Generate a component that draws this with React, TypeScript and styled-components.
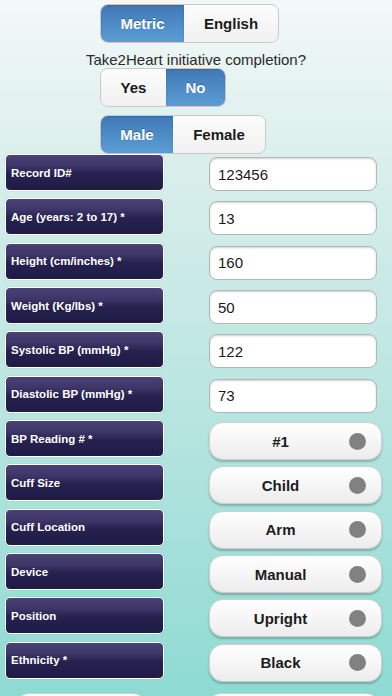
import React from 'react';
import styled, { createGlobalStyle, css } from 'styled-components';

let GlobalStyle = createGlobalStyle`
  html, body {
    margin: 0;
    padding: 0;
  }
  body {
    font-family: 'Liberation Sans', Arial, Helvetica, sans-serif;
    color: #222;
  }
`;

// ---------
// PAGE
// ---------

let Page = styled.div`
  height: 100vh;
  overflow: hidden;
  box-sizing: border-box;
  padding-top: 4px;
  background: linear-gradient(180deg, #f3f9f8 0%, #dbefec 22%, #b9e5e0 58%, #8edbd3 100%);
`;

let Question = styled.div`
  text-align: center;
  font-size: 15px;
  line-height: 16px;
  margin: 9px 0 0;
  color: #2a2a2a;
`;

// ---------
// SEGMENTED
// ---------

let Segmented = styled.div<{ top?: number }>`
  display: flex;
  margin-left: 100px;
  margin-top: ${({ top }) => top ?? 0}px;
  width: fit-content;
  height: 39px;
  border-radius: 8px;
  overflow: hidden;
  border: 1px solid #c9c9c9;
  box-sizing: border-box;
`;

let Segment = styled.div<{ active: boolean; w: number }>`
  width: ${({ w }) => w}px;
  display: flex;
  align-items: center;
  justify-content: center;
  font-size: 15px;
  font-weight: 700;
  ${({ active }) =>
    active
      ? css`
          color: #fff;
          background: linear-gradient(180deg, #4179b6 0%, #4d8bc5 50%, #5b9dd4 100%);
          text-shadow: 0 -1px 0 rgba(0, 0, 0, 0.3);
          box-shadow: inset 0 1px 2px rgba(0, 0, 0, 0.15);
        `
      : css`
          color: #1b1b1b;
          background: linear-gradient(180deg, #fcfcfc 0%, #f1f1f1 100%);
        `}
`;

// ---------
// FORM
// ---------

let Form = styled.div`
  display: grid;
  grid-template-columns: 159px 1fr;
  grid-auto-rows: 37px;
  row-gap: 7.35px;
  column-gap: 45px;
  padding: 0 10px 0 5px;
`;

let Label = styled.div`
  box-sizing: border-box;
  display: flex;
  align-items: center;
  padding-left: 5px;
  border: 1.5px solid #fff;
  border-radius: 5px;
  background: linear-gradient(180deg, #4a4174 0%, #3e3668 30%, #26214f 55%, #1f1b46 100%);
  color: #fff;
  font-size: 11.5px;
  font-weight: 700;
  box-shadow: 0 0 1px rgba(0, 0, 0, 0.3);
`;

let Input = styled.div`
  align-self: end;
  box-sizing: border-box;
  width: 168px;
  height: 34px;
  display: flex;
  align-items: center;
  padding-left: 8px;
  border: 1px solid #b5b5b5;
  border-radius: 8px;
  background: #fff;
  box-shadow: inset 0 1px 2px rgba(0, 0, 0, 0.18);
  font-size: 15px;
  color: #1a1a1a;
`;

let Select = styled.div`
  box-sizing: border-box;
  width: 173px;
  height: 38px;
  margin-top: 2px;
  display: flex;
  align-items: center;
  border: 1px solid #cfcfcf;
  border-radius: 14px;
  background: linear-gradient(180deg, #ffffff 0%, #f6f6f6 50%, #ececec 100%);
  box-shadow: 0 2px 2px rgba(0, 0, 0, 0.22);
`;

let SelectText = styled.span`
  flex: 1;
  text-align: center;
  font-size: 15px;
  font-weight: 700;
  color: #1c1c1c;
  padding-left: 16px;
`;

let Dot = styled.span`
  width: 17px;
  height: 17px;
  border-radius: 50%;
  background: #818181;
  margin: 0 15px 0 14px;
`;

let Actions = styled.div`
  display: flex;
  gap: 60px;
  padding: 14px 0 0 15px;
`;

let ActionButton = styled.div<{ w: number }>`
  width: ${({ w }) => w}px;
  height: 38px;
  box-sizing: border-box;
  border: 1px solid #cfcfcf;
  border-radius: 14px;
  background: linear-gradient(180deg, #ffffff 0%, #ececec 100%);
`;

let inputs = [
  ['Record ID#', '123456'],
  ['Age (years: 2 to 17) *', '13'],
  ['Height (cm/inches) *', '160'],
  ['Weight (Kg/lbs) *', '50'],
  ['Systolic BP (mmHg) *', '122'],
  ['Diastolic BP (mmHg) *', '73'],
];

let selects = [
  ['BP Reading # *', '#1'],
  ['Cuff Size', 'Child'],
  ['Cuff Location', 'Arm'],
  ['Device', 'Manual'],
  ['Position', 'Upright'],
  ['Ethnicity *', 'Black'],
];

export default function App() {
  return (
    <Page>
      <GlobalStyle />
      <Segmented>
        <Segment active w={83}>Metric</Segment>
        <Segment active={false} w={94}>English</Segment>
      </Segmented>
      <Question>Take2Heart initiative completion?</Question>
      <Segmented>
        <Segment active={false} w={65}>Yes</Segment>
        <Segment active w={59}>No</Segment>
      </Segmented>
      <Segmented top={8}>
        <Segment active w={72}>Male</Segment>
        <Segment active={false} w={92}>Female</Segment>
      </Segmented>
      <Form>
        {inputs.map(([label, value]) => (
          <React.Fragment key={label}>
            <Label>{label}</Label>
            <Input>{value}</Input>
          </React.Fragment>
        ))}
        {selects.map(([label, value]) => (
          <React.Fragment key={label}>
            <Label>{label}</Label>
            <Select>
              <SelectText>{value}</SelectText>
              <Dot />
            </Select>
          </React.Fragment>
        ))}
      </Form>
      <Actions>
        <ActionButton w={132} />
        <ActionButton w={173} />
      </Actions>
    </Page>
  );
}
